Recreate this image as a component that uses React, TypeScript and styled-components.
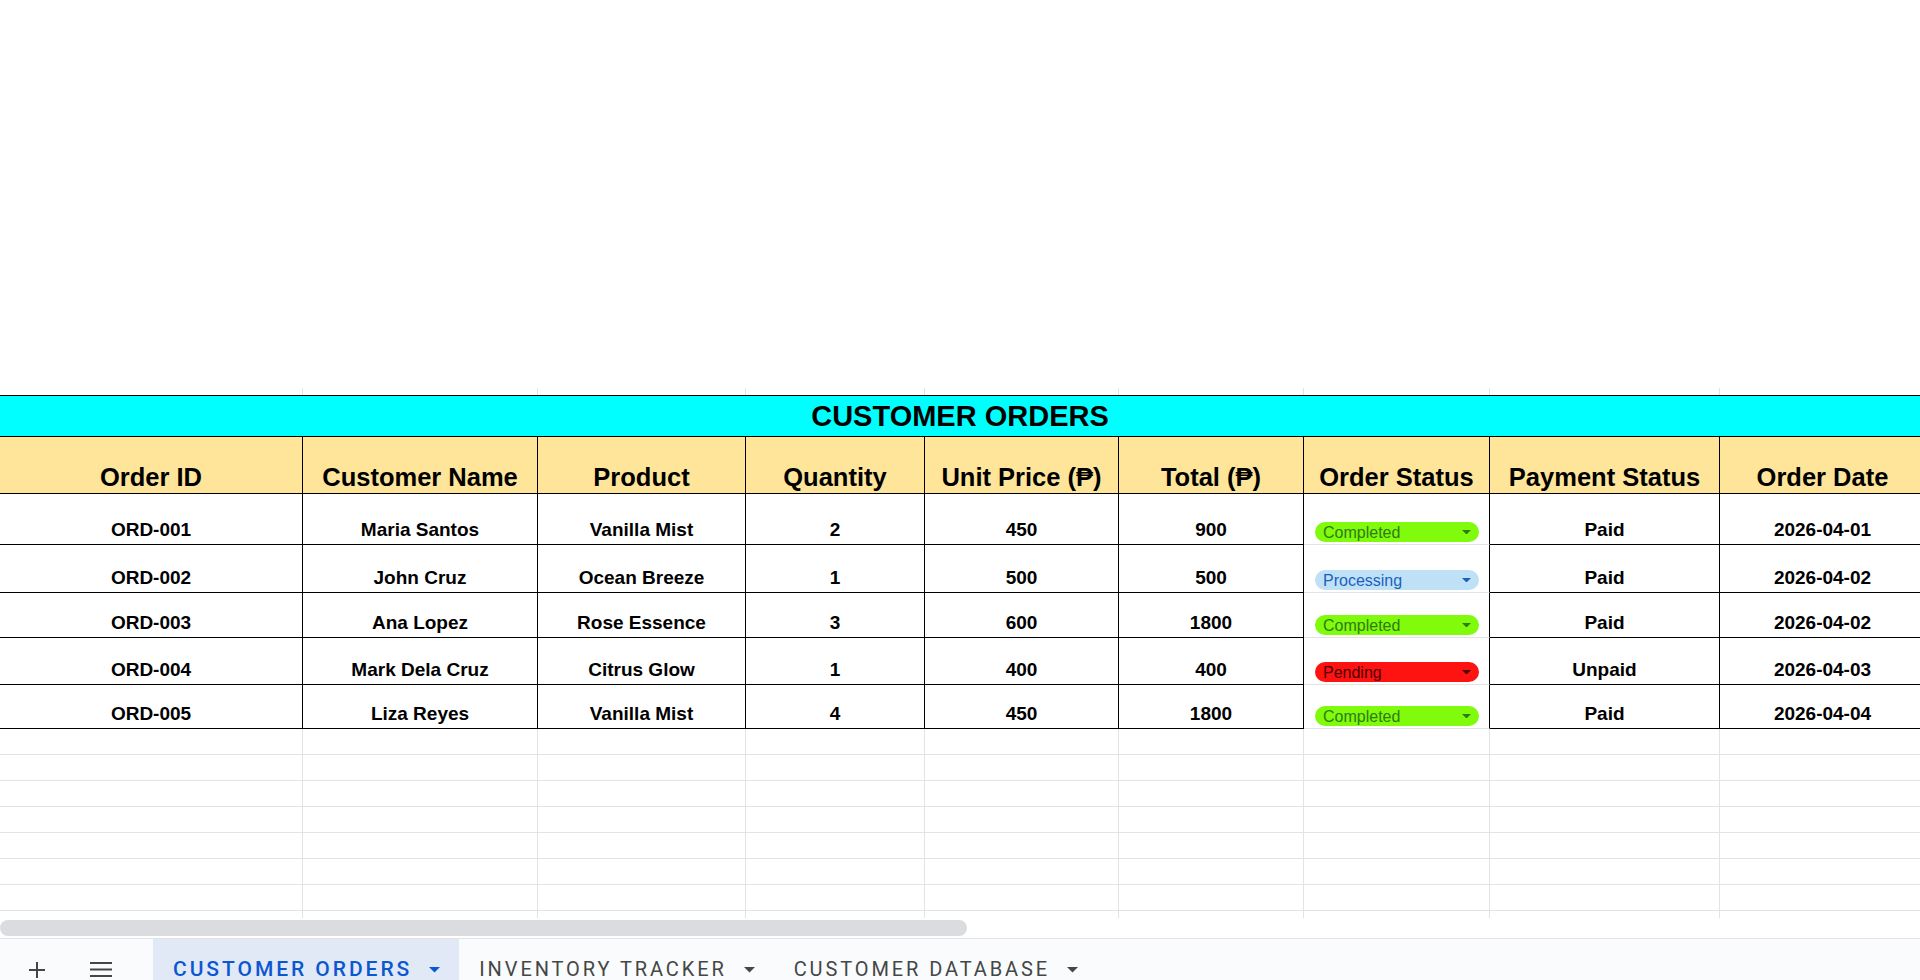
import styled, { createGlobalStyle } from 'styled-components';

const GlobalStyle = createGlobalStyle`
  html, body {
    margin: 0;
    padding: 0;
    background: #ffffff;
  }
  body {
    font-family: 'Liberation Sans', Arial, sans-serif;
    overflow: hidden;
  }
`;

type Status = 'Completed' | 'Processing' | 'Pending';

type Order = {
  id: string;
  name: string;
  product: string;
  qty: number;
  price: number;
  total: number;
  status: Status;
  payment: string;
  date: string;
};

const COLUMN_WIDTHS = [303, 235, 208, 179, 194, 185, 186, 230, 206];
const ROW_HEIGHTS = [51, 48, 45, 47, 44];
const EMPTY_ROWS = 8;
const STATUS_COL = 6;

const HEADERS = [
  'Order ID',
  'Customer Name',
  'Product',
  'Quantity',
  'Unit Price (₱)',
  'Total (₱)',
  'Order Status',
  'Payment Status',
  'Order Date',
];

const orders: Order[] = [
  { id: 'ORD-001', name: 'Maria Santos', product: 'Vanilla Mist', qty: 2, price: 450, total: 900, status: 'Completed', payment: 'Paid', date: '2026-04-01' },
  { id: 'ORD-002', name: 'John Cruz', product: 'Ocean Breeze', qty: 1, price: 500, total: 500, status: 'Processing', payment: 'Paid', date: '2026-04-02' },
  { id: 'ORD-003', name: 'Ana Lopez', product: 'Rose Essence', qty: 3, price: 600, total: 1800, status: 'Completed', payment: 'Paid', date: '2026-04-02' },
  { id: 'ORD-004', name: 'Mark Dela Cruz', product: 'Citrus Glow', qty: 1, price: 400, total: 400, status: 'Pending', payment: 'Unpaid', date: '2026-04-03' },
  { id: 'ORD-005', name: 'Liza Reyes', product: 'Vanilla Mist', qty: 4, price: 450, total: 1800, status: 'Completed', payment: 'Paid', date: '2026-04-04' },
];

const CHIP_COLORS: Record<Status, { bg: string; fg: string }> = {
  Completed: { bg: '#80fb0c', fg: '#2f7a14' },
  Processing: { bg: '#bfe1f6', fg: '#1d5fc0' },
  Pending: { bg: '#ff1212', fg: '#4a0000' },
};

const SHEETS = ['CUSTOMER ORDERS', 'INVENTORY TRACKER', 'CUSTOMER DATABASE'];

function DropArrow({ color, width = 11 }: { color: string; width?: number }) {
  return (
    <svg width={width} height={width / 2} viewBox="0 0 10 5">
      <path d="M0 0 L10 0 L5 5 Z" fill={color} />
    </svg>
  );
}

function StatusChip({ status }: { status: Status }) {
  const c = CHIP_COLORS[status];
  return (
    <Chip $bg={c.bg} $fg={c.fg}>
      <span>{status}</span>
      <DropArrow color={c.fg} width={9} />
    </Chip>
  );
}

export default function App() {
  return (
    <>
      <GlobalStyle />
      <Page>
        <Blank />
        <SheetArea>
          <Grid>
            {COLUMN_WIDTHS.map((_, i) => (
              <GapCell key={`gap-${i}`} />
            ))}
            <TitleCell>CUSTOMER ORDERS</TitleCell>
            {HEADERS.map(h => (
              <HeaderCell key={h}>{h}</HeaderCell>
            ))}
            {orders.map(o => {
              const values = [o.id, o.name, o.product, o.qty, o.price, o.total, null, o.payment, o.date];
              return values.map((v, i) =>
                i === STATUS_COL ? (
                  <StatusCell key={`${o.id}-${i}`}>
                    <StatusChip status={o.status} />
                  </StatusCell>
                ) : (
                  <DataCell key={`${o.id}-${i}`}>{v}</DataCell>
                ),
              );
            })}
            {Array.from({ length: EMPTY_ROWS * COLUMN_WIDTHS.length }, (_, i) => (
              <EmptyCell key={`empty-${i}`} />
            ))}
          </Grid>
        </SheetArea>
        <ScrollTrack>
          <ScrollThumb />
        </ScrollTrack>
        <TabBar>
          <IconButton $gap={28}>
            <svg width="20" height="20" viewBox="0 0 20 20">
              <path d="M10 2 V18 M2 10 H18" stroke="#444746" strokeWidth="2" />
            </svg>
          </IconButton>
          <IconButton $gap={34}>
            <svg width="24" height="20" viewBox="0 0 24 20">
              <path d="M1 3 H23 M1 9.5 H23 M1 16 H23" stroke="#444746" strokeWidth="2" />
            </svg>
          </IconButton>
          <Tabs>
            {SHEETS.map((name, i) => (
              <SheetTab key={name} $active={i === 0}>
                <TabLabel $active={i === 0}>{name}</TabLabel>
                <DropArrow color={i === 0 ? '#0b57d0' : '#444746'} />
              </SheetTab>
            ))}
          </Tabs>
        </TabBar>
      </Page>
    </>
  );
}

const Page = styled.div`
  width: 1920px;
  height: 980px;
  display: flex;
  flex-direction: column;
  overflow: hidden;
  background: #ffffff;
`;

const Blank = styled.div`
  height: 388px;
  flex: none;
`;

const SheetArea = styled.div`
  height: 530px;
  flex: none;
  overflow: hidden;
`;

const Grid = styled.div`
  display: grid;
  grid-template-columns: ${COLUMN_WIDTHS.map(w => `${w}px`).join(' ')};
  grid-template-rows: 7px 42px 57px ${ROW_HEIGHTS.map(h => `${h}px`).join(' ')} repeat(${EMPTY_ROWS}, 26px);
  width: ${COLUMN_WIDTHS.reduce((a, b) => a + b, 0)}px;
`;

const Cell = styled.div<{ $dark?: boolean }>`
  box-sizing: border-box;
  display: flex;
  align-items: flex-end;
  justify-content: center;
  white-space: nowrap;
  overflow: hidden;
  color: #000000;
  border-right: 1px solid ${p => (p.$dark === false ? '#e2e3e3' : '#000000')};
  border-bottom: 1px solid ${p => (p.$dark === false ? '#e2e3e3' : '#000000')};
`;

const GapCell = styled.div`
  border-right: 1px solid #e2e3e3;
`;

const TitleCell = styled.div`
  grid-column: 1 / -1;
  box-sizing: border-box;
  display: flex;
  align-items: center;
  justify-content: center;
  padding-right: 6px;
  background: #00ffff;
  border-top: 1px solid #000000;
  border-bottom: 1px solid #000000;
  font-size: 29px;
  font-weight: bold;
  color: #000000;
`;

const HeaderCell = styled(Cell)`
  background: #ffe599;
  font-size: 25.5px;
  font-weight: bold;
  line-height: 30px;
  padding-bottom: 1px;
`;

const DataCell = styled(Cell)`
  font-size: 19px;
  font-weight: bold;
  line-height: 22px;
  padding-bottom: 3px;
`;

const StatusCell = styled.div`
  box-sizing: border-box;
  display: flex;
  align-items: flex-end;
  padding: 0 10px 2px 11px;
  border-right: 1px solid #000000;
  border-bottom: 1px solid #e2e3e3;
`;

const EmptyCell = styled.div`
  border-right: 1px solid #e2e3e3;
  border-bottom: 1px solid #e2e3e3;
`;

const Chip = styled.div<{ $bg: string; $fg: string }>`
  flex: 1;
  height: 20px;
  box-sizing: border-box;
  display: flex;
  align-items: center;
  justify-content: space-between;
  padding: 0 8px 0 8px;
  border-radius: 10px;
  background: ${p => p.$bg};
  color: ${p => p.$fg};
  font-size: 16px;
  line-height: 20px;

  span {
    padding-top: 2px;
  }
`;

const ScrollTrack = styled.div`
  height: 20px;
  flex: none;
  box-sizing: border-box;
  padding-top: 2px;
  background: #ffffff;
`;

const ScrollThumb = styled.div`
  width: 967px;
  height: 16px;
  border-radius: 8px;
  background: #dadce0;
`;

const TabBar = styled.div`
  flex: 1;
  display: flex;
  align-items: flex-start;
  padding-left: 19px;
  background: #f9fbfd;
  border-top: 1px solid #e1e3e6;
  overflow: hidden;
`;

const IconButton = styled.div<{ $gap: number }>`
  width: 36px;
  height: 60px;
  flex: none;
  display: flex;
  justify-content: center;
  padding-top: 21px;
  box-sizing: border-box;
  margin-right: ${p => p.$gap}px;
`;

const Tabs = styled.div`
  display: flex;
`;

const SheetTab = styled.div<{ $active: boolean }>`
  height: 60px;
  box-sizing: border-box;
  display: flex;
  align-items: flex-start;
  gap: 17px;
  padding: 18px 19px 0 20px;
  background: ${p => (p.$active ? '#e1e9f7' : 'transparent')};

  svg {
    margin-top: 10px;
  }
`;

const TabLabel = styled.span<{ $active: boolean }>`
  font-family: Roboto, 'Noto Sans', sans-serif;
  font-size: ${p => (p.$active ? 21 : 20)}px;
  line-height: 24px;
  letter-spacing: ${p => (p.$active ? 2.95 : 2.9)}px;
  font-weight: ${p => (p.$active ? 500 : 400)};
  color: ${p => (p.$active ? '#0b57d0' : '#444746')};
`;
